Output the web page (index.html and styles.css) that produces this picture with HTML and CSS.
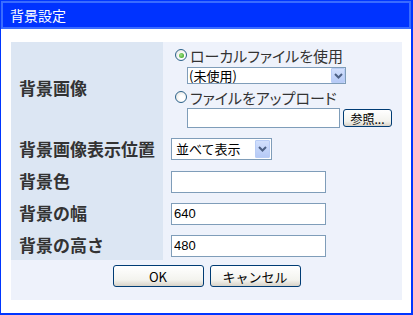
FILE: index.html
```html
<!DOCTYPE html>
<html lang="ja">
<head>
    <meta charset="UTF-8" />
    <title>背景設定</title>
    <link rel="stylesheet" href="styles.css">
</head>
<body>
    <div class="window">
        <div class="titlebar">背景設定</div>

        <div class="content">
            <div class="panel">
                <table class="form">
                    <tr class="row-image">
                        <th>背景画像</th>
                        <td>
                            <label class="radio"><span class="dot checked"></span>ローカルファイルを使用</label>
                            <div class="select select-local">
                                <span class="select-value">(未使用)</span>
                                <span class="select-arrow">
                                    <svg width="9" height="6" viewBox="0 0 9 6"><polyline points="1,1 4.5,4.5 8,1" fill="none" stroke="#4d6185" stroke-width="2"/></svg>
                                </span>
                            </div>
                            <label class="radio radio-upload"><span class="dot"></span>ファイルをアップロード</label>
                            <div class="file-row">
                                <input class="file-path" type="text">
                                <button class="browse">参照...</button>
                            </div>
                        </td>
                    </tr>
                    <tr class="row-pos">
                        <th>背景画像表示位置</th>
                        <td>
                            <div class="select select-pos">
                                <span class="select-value">並べて表示</span>
                                <span class="select-arrow">
                                    <svg width="9" height="6" viewBox="0 0 9 6"><polyline points="1,1 4.5,4.5 8,1" fill="none" stroke="#4d6185" stroke-width="2"/></svg>
                                </span>
                            </div>
                        </td>
                    </tr>
                    <tr>
                        <th>背景色</th>
                        <td><input class="field" type="text" value=""></td>
                    </tr>
                    <tr>
                        <th>背景の幅</th>
                        <td><input class="field" type="text" value="640"></td>
                    </tr>
                    <tr>
                        <th>背景の高さ</th>
                        <td><input class="field" type="text" value="480"></td>
                    </tr>
                </table>

                <div class="actions">
                    <button class="btn">OK</button>
                    <button class="btn">キャンセル</button>
                </div>
            </div>
        </div>
    </div>
</body>
</html>
```

FILE: styles.css
```css
* {
    margin: 0;
    padding: 0;
    box-sizing: border-box;
    font-family: "Noto Sans CJK JP", "Liberation Sans", sans-serif;
}

body {
    background-color: #fff;
}

.window {
    width: 413px;
    height: 315px;
    border: 1px solid #0036ff;
    border-width: 1px 2px 2px 1px;
    background-color: #fff;
}

.titlebar {
    height: 28px;
    border: 2px solid #3a6cff;
    background-color: #0033ff;
    color: #fff;
    font-size: 14px;
    line-height: 24px;
    padding-left: 7px;
}

.content {
    padding: 13px 9px 13px 10px;
}

.panel {
    background-color: #eef2fb;
}

.form {
    width: 100%;
    border-collapse: collapse;
    border-spacing: 0;
}

.form th {
    width: 152px;
    background-color: #dce6f3;
    color: #333;
    font-size: 17px;
    font-weight: bold;
    text-align: left;
    padding-left: 8px;
    white-space: nowrap;
    vertical-align: middle;
}

.form td {
    padding-left: 8px;
    vertical-align: middle;
}

.form tr {
    height: 32px;
}

.form tr.row-pos {
    height: 31px;
}

.row-image td {
    padding-top: 3px;
    padding-bottom: 5px;
}

.radio {
    display: flex;
    align-items: center;
    height: 20px;
    font-size: 15px;
    color: #333;
    font-feature-settings: "palt";
}

.radio-upload {
    margin-top: 3px;
}

.dot {
    width: 12px;
    height: 12px;
    margin: 0 3px 0 4px;
    border: 1px solid #2c628b;
    border-radius: 50%;
    background: radial-gradient(circle at 60% 60%, #fff 30%, #dcdcd6);
    display: flex;
    align-items: center;
    justify-content: center;
}

.dot.checked::after {
    content: "";
    width: 5px;
    height: 5px;
    border-radius: 50%;
    background: radial-gradient(circle at 40% 40%, #9fe08a, #2a9c10);
}

.select {
    display: flex;
    align-items: stretch;
    border: 1px solid #7f9db9;
    background-color: #fff;
    padding: 1px;
}

.select-value {
    flex: 1;
    font-size: 13px;
    color: #000;
    padding-left: 1px;
    display: flex;
    align-items: center;
}

.select-arrow {
    width: 14px;
    border: 1px solid #b9cdf6;
    border-radius: 1px;
    background: linear-gradient(#d2e0fd, #b6caf6);
    display: flex;
    align-items: center;
    justify-content: center;
}

.select-local {
    width: 159px;
    height: 17px;
    margin: 2px 0 0 16px;
    padding: 0 0 0 0;
}

.select-pos {
    width: 101px;
    height: 22px;
    padding: 1px 1px 1px 3px;
}

.select-pos .select-arrow {
    width: 15px;
}

.file-row {
    display: flex;
    align-items: center;
    height: 20px;
    margin: 1px 0 0 16px;
}

.file-path {
    width: 153px;
    height: 20px;
    border: 1px solid #7f9db9;
    outline: none;
}

.browse {
    width: 49px;
    height: 18px;
    margin-left: 3px;
    font-size: 12px;
    border: 1px solid #003c74;
    border-radius: 3px;
    background: linear-gradient(#fff, #f3f3ee 70%, #d8d3c8);
    color: #000;
}

.field {
    width: 155px;
    height: 22px;
    border: 1px solid #7f9db9;
    padding-left: 2px;
    font-family: "Liberation Sans", sans-serif;
    font-size: 13px;
    color: #000;
    outline: none;
}

.actions {
    display: flex;
    justify-content: center;
    gap: 6px;
    padding: 5px 0 13px;
}

.btn {
    width: 91px;
    height: 22px;
    font-size: 13px;
    color: #000;
    border: 1px solid #003c74;
    border-radius: 3px;
    background: linear-gradient(#fff, #f3f3ee 70%, #d8d3c8);
}
```
